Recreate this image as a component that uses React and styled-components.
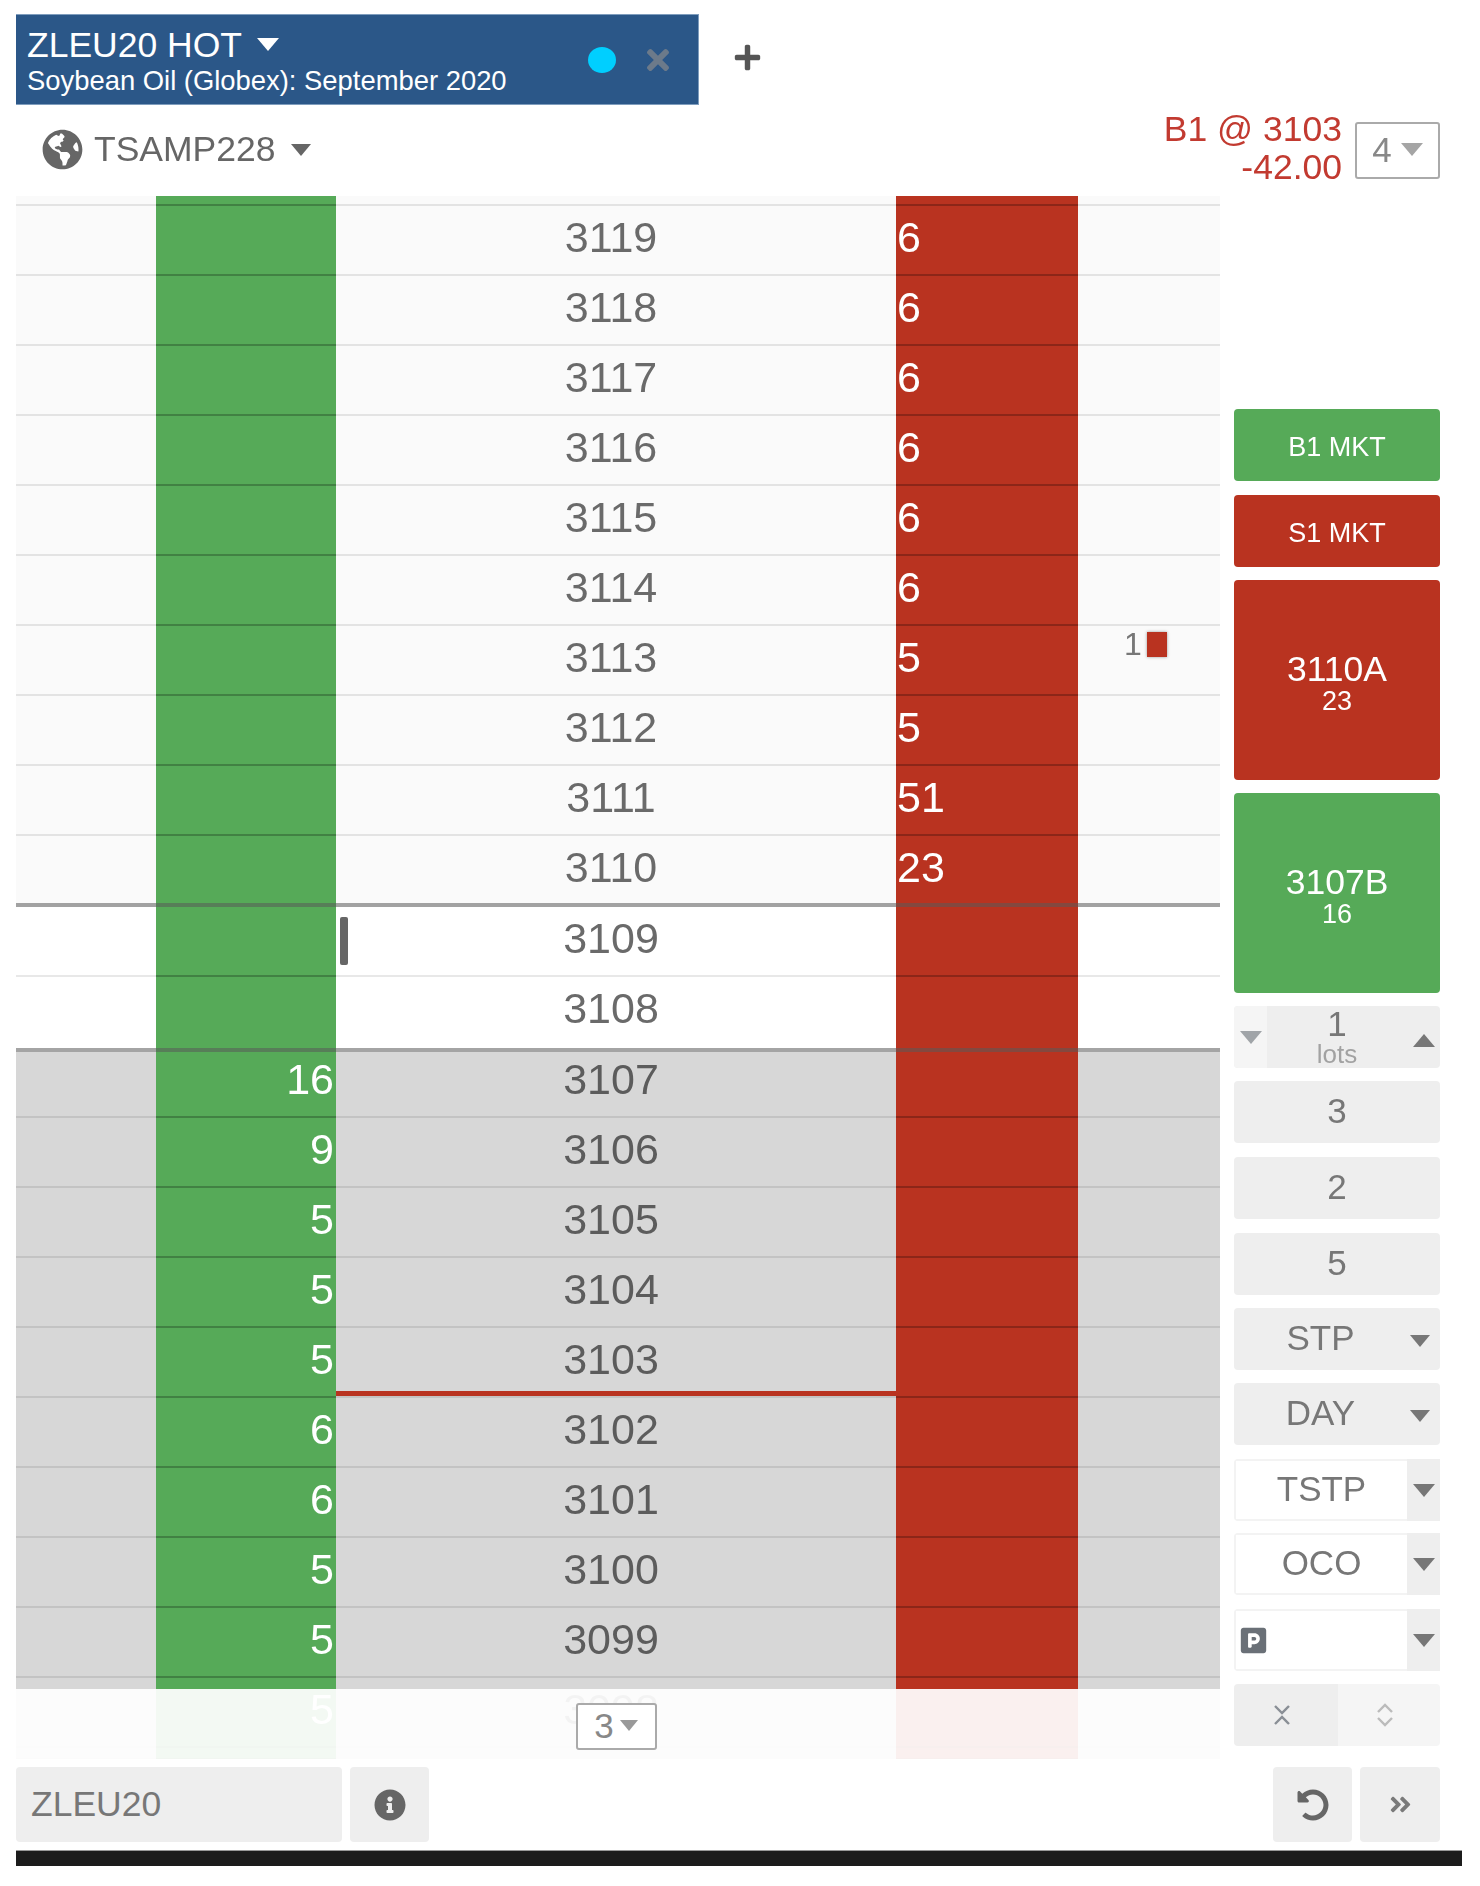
import React from 'react'
import styled, { createGlobalStyle } from 'styled-components'
import { FaGlobeAmericas, FaPlus, FaTimes, FaInfoCircle, FaUndoAlt, FaAngleDoubleRight, FaParking } from 'react-icons/fa'

const GREEN = '#56aa58'
const RED = '#b93320'
const FONT = '"Liberation Sans", Arial, sans-serif'

const GlobalStyle = createGlobalStyle`
    html, body {
        margin: 0;
        padding: 0;
        background: #fff;
        font-family: ${FONT};
    }
`

const Page = styled.div`
    width: 1480px;
    height: 1886px;
    padding: 14px 0 0 16px;
    box-sizing: border-box;
    overflow: hidden;
    color: #666;
    filter: blur(.6px);
`

const Caret = styled.span`
    display: inline-block;
    width: 0;
    height: 0;
    border-left: ${p => p.$size || 10}px solid transparent;
    border-right: ${p => p.$size || 10}px solid transparent;
    ${p => p.$up ? 'border-bottom' : 'border-top'}: ${p => (p.$size || 10) + 2}px solid ${p => p.$color || '#777'};
    flex: none;
`

const TabRow = styled.div`
    display: flex;
    align-items: center;
    height: 91px;
`

const Tab = styled.div`
    width: 683px;
    height: 91px;
    box-sizing: border-box;
    background: #2b5788;
    border: 1px solid #7f9dbd;
    border-left: 0;
    color: #fff;
    display: flex;
    align-items: center;
    padding: 0 24px 0 11px;
`

const TabText = styled.div`
    flex: 1;
`

const TabTitle = styled.div`
    font-size: 35.5px;
    line-height: 40px;
    display: flex;
    align-items: center;
    gap: 15px;
`

const TabSub = styled.div`
    font-size: 27.4px;
    line-height: 28px;
    margin-top: 2px;
    white-space: nowrap;
`

const Dot = styled.span`
    width: 28px;
    height: 26px;
    border-radius: 50%;
    background: #00cfff;
    margin-right: 26px;
`

const PlusButton = styled.div`
    margin-left: 34px;
    font-size: 29px;
    color: #555;
    display: flex;
    margin-top: -5px;
`

const AccountRow = styled.div`
    height: 91px;
    display: flex;
    align-items: center;
    padding-left: 26px;
    width: 1424px;
    box-sizing: border-box;
`

const Account = styled.div`
    flex: 1;
    display: flex;
    align-items: center;
    gap: 15px;
    font-size: 35.5px;
    color: #666;
    margin-top: -2px;
`

const AccountName = styled.div`
    display: flex;
    align-items: center;
    gap: 11px;
    svg {
        font-size: 41px;
    }
`

const Position = styled.div`
    color: #c23a30;
    font-size: 35.5px;
    line-height: 38px;
    text-align: right;
    margin-right: 13px;
    margin-top: -6px;
`

const SmallSelect = styled.div`
    box-sizing: border-box;
    width: ${p => p.$w}px;
    height: ${p => p.$h}px;
    padding-bottom: 2px;
    border: 2px solid #aaa;
    border-radius: 3px;
    background: #fff;
    display: flex;
    align-items: center;
    justify-content: center;
    gap: ${p => p.$gap}px;
    font-size: ${p => p.$font}px;
    color: #888;
`

const Main = styled.div`
    display: flex;
    gap: 14px;
`

const Ladder = styled.div`
    position: relative;
    width: 1204px;
    height: 1563px;
    overflow: hidden;
`

const Row = styled.div`
    display: grid;
    grid-template-columns: 140px 180px 560px 182px 142px;
    height: ${p => p.$h}px;
    line-height: ${p => p.$lh || 62}px;
    background: ${p => p.$bg};
`

const Cell = styled.div`
    position: relative;
    box-sizing: border-box;
    border-bottom: ${p => p.$thick ? '4px' : '2px'} solid
        ${p => p.$thick ? 'rgba(90, 90, 90, .55)' : p.$dark ? 'rgba(0, 0, 0, .24)' : 'rgba(0, 0, 0, .09)'};
    font-size: 43px;
    white-space: nowrap;
`

const BidCell = styled(Cell)`
    background: ${GREEN};
    color: #fff;
    text-align: right;
    padding-right: 2px;
`

const AskCell = styled(Cell)`
    background: ${RED};
    color: #fff;
    padding-left: 1px;
`

const PriceCell = styled(Cell)`
    text-align: center;
    padding-right: 10px;
    color: ${p => p.$shade ? '#5c5c5c' : '#6a6a6a'};
`

const RedLine = styled.div`
    position: absolute;
    left: 0;
    right: 0;
    bottom: 0;
    height: 5px;
    background: ${RED};
`

const Cursor = styled.div`
    position: absolute;
    left: 4px;
    top: 10px;
    width: 8px;
    height: 48px;
    border-radius: 2px;
    background: #666;
`

const Working = styled.div`
    position: absolute;
    left: 46px;
    top: 5px;
    display: flex;
    align-items: center;
    gap: 5px;
    font-size: 32px;
    line-height: 26px;
    color: #777;
`

const WorkingMark = styled.span`
    width: 20px;
    height: 25px;
    background: ${RED};
    box-shadow: 0 0 3px #999;
`

const FadeBar = styled.div`
    position: absolute;
    left: 0;
    right: 0;
    top: 1493px;
    height: 70px;
    background: rgba(255, 255, 255, .93);
    display: flex;
    justify-content: center;
    padding: 14px 4px 0 0;
    box-sizing: border-box;
`

const Panel = styled.div`
    width: 206px;
    padding-top: 213px;
    display: flex;
    flex-direction: column;
`

const PanelBtn = styled.div`
    box-sizing: border-box;
    height: ${p => p.$h || 62}px;
    margin-bottom: ${p => p.$gap || 13}px;
    border-radius: 4px;
    background: ${p => p.$bg || '#eee'};
    color: ${p => p.$bg ? '#fff' : '#777'};
    font-size: ${p => p.$font || 35}px;
    padding-top: ${p => p.$top || 0}px;
    padding-bottom: ${p => p.$bottom || 0}px;
    display: flex;
    flex-direction: column;
    align-items: center;
    justify-content: center;
`

const Quote = styled.div`
    font-size: 35.5px;
    line-height: 37px;
`

const QuoteSize = styled.div`
    font-size: 27px;
    line-height: 26px;
`

const LotsBox = styled.div`
    display: grid;
    grid-template-columns: 33px 1fr 33px;
    height: 62px;
    margin-bottom: 13px;
    border-radius: 4px;
    background: #eee;
`

const LotsSide = styled.div`
    display: flex;
    align-items: center;
    justify-content: center;
    border-radius: 4px 0 0 4px;
    background: ${p => p.$light ? '#f5f5f5' : 'transparent'};
    padding-top: ${p => p.$top || 0}px;
`

const LotsValue = styled.div`
    text-align: center;
    color: #777;
    font-size: 35px;
    line-height: 36px;
`

const LotsLabel = styled.span`
    display: block;
    font-size: 26px;
    line-height: 24px;
    color: #a2a2a2;
`

const DropBtn = styled.div`
    height: 62px;
    margin-bottom: ${p => p.$gap || 13}px;
    padding: 0 10px 3px 0;
    border-radius: 4px;
    background: #eee;
    color: #777;
    font-size: 35px;
    display: flex;
    align-items: center;
    box-sizing: border-box;
`

const DropLabel = styled.div`
    flex: 1;
    text-align: center;
    padding-right: 3px;
`

const DropCaret = styled(Caret)`
    margin-top: 6px;
`

const InputDrop = styled.div`
    height: 62px;
    margin-bottom: ${p => p.$gap}px;
    border-radius: 4px;
    background: #f3f3f3;
    display: flex;
    box-sizing: border-box;
`

const InputField = styled.div`
    flex: 1;
    margin: 2px 0 2px 2px;
    padding-bottom: ${p => p.$start ? '0' : '2px'};
    background: #fff;
    color: #777;
    font-size: 35px;
    display: flex;
    align-items: center;
    justify-content: ${p => p.$start ? 'flex-start' : 'center'};
    padding-left: ${p => p.$start ? '3px' : '0'};
    svg {
        font-size: 29px;
        color: #6a7077;
    }
`

const InputCaret = styled.div`
    width: 33px;
    background: #eee;
    display: flex;
    align-items: center;
    justify-content: center;
`

const SplitBtn = styled.div`
    display: flex;
    height: 62px;
    border-radius: 4px;
    overflow: hidden;
`

const SplitPart = styled.div`
    width: ${p => p.$w}px;
    background: ${p => p.$bg};
    padding-right: 8px;
    box-sizing: border-box;
    display: flex;
    align-items: center;
    justify-content: center;
`

const Footer = styled.div`
    width: 1424px;
    height: 75px;
    margin-top: 8px;
    display: flex;
    gap: 8px;
`

const SymbolBox = styled.div`
    width: 326px;
    border-radius: 4px;
    background: #eee;
    color: #777;
    font-size: 35.5px;
    line-height: 75px;
    padding-left: 15px;
    box-sizing: border-box;
`

const IconBtn = styled.div`
    width: ${p => p.$w}px;
    margin-left: ${p => p.$auto ? 'auto' : '0'};
    border-radius: 4px;
    background: #eee;
    color: ${p => p.$color || '#666'};
    font-size: ${p => p.$size}px;
    display: flex;
    align-items: center;
    justify-content: center;
`

const BlackBar = styled.div`
    width: 1446px;
    height: 16px;
    margin-top: 8px;
    background: #1c1c1c;
    border-top: 1px solid #999;
    box-sizing: border-box;
`

const Chevrons = ({ inward, color }) => (
    <svg width="16" height={inward ? 20 : 24} viewBox={inward ? '0 0 16 20' : '0 0 16 24'} fill="none" stroke={color} strokeWidth="2.4">
        {inward
            ? <path d="M1 1 L8 8 L15 1 M1 19 L8 12 L15 19" />
            : <path d="M1 9 L8 2 L15 9 M1 15 L8 22 L15 15" />}
    </svg>
)

// ladder prices, sizes sit on the row they belong to
const asks = { 3119: 6, 3118: 6, 3117: 6, 3116: 6, 3115: 6, 3114: 6, 3113: 5, 3112: 5, 3111: 51, 3110: 23 }
const bids = { 3107: 16, 3106: 9, 3105: 5, 3104: 5, 3103: 5, 3102: 6, 3101: 6, 3100: 5, 3099: 5, 3098: 5 }

// rows around the inside market are not all the same height in the ladder
const rowHeight = price => {
    if (price === 3110) return 71
    if (price === 3108) return 75
    if (price === 3107) return 66
    return 70
}

const rowBackground = price => {
    if (price >= 3110) return '#fafafa'
    if (price >= 3108) return '#fff'
    return '#d7d7d7'
}

const prices = []
for (let p = 3119; p >= 3098; p--) prices.push(p)

const EmptyRow = ({ h, bg }) => (
    <Row $h={h} $bg={bg}>
        <Cell />
        <BidCell $dark />
        <PriceCell />
        <AskCell $dark />
        <Cell />
    </Row>
)

const LadderRow = ({ price }) => {
    const shade = price <= 3107
    const thick = price === 3110 || price === 3108
    return (
        <Row $h={rowHeight(price)} $lh={price === 3107 ? 54 : 62} $bg={rowBackground(price)}>
            <Cell $thick={thick} />
            <BidCell $dark $thick={thick}>{bids[price]}</BidCell>
            <PriceCell $shade={shade} $thick={thick}>
                {price}
                {price === 3109 && <Cursor />}
                {price === 3103 && <RedLine />}
            </PriceCell>
            <AskCell $dark $thick={thick}>{asks[price]}</AskCell>
            <Cell $thick={thick}>
                {price === 3113 && <Working>1<WorkingMark /></Working>}
            </Cell>
        </Row>
    )
}

const App = () => (
    <Page>
        <GlobalStyle />
        <TabRow>
            <Tab>
                <TabText>
                    <TabTitle>ZLEU20 HOT <Caret $color="#fff" $size={11} /></TabTitle>
                    <TabSub>Soybean Oil (Globex): September 2020</TabSub>
                </TabText>
                <Dot />
                <FaTimes size={32} color="#6c7a8a" />
            </Tab>
            <PlusButton><FaPlus /></PlusButton>
        </TabRow>
        <AccountRow>
            <Account>
                <AccountName><FaGlobeAmericas />TSAMP228</AccountName>
                <Caret $size={10} $color="#666" />
            </Account>
            <Position>B1 @ 3103<br />-42.00</Position>
            <SmallSelect $w={85} $h={57} $gap={9} $font={35}>4 <Caret $size={11} $color="#a5a5a5" /></SmallSelect>
        </AccountRow>
        <Main>
            <Ladder>
                <EmptyRow h={10} bg="#fafafa" />
                {prices.map(price => <LadderRow key={price} price={price} />)}
                <EmptyRow h={12} bg="#d7d7d7" />
                <FadeBar>
                    <SmallSelect $w={81} $h={47} $gap={6} $font={35}>3 <Caret $size={9} $color="#999" /></SmallSelect>
                </FadeBar>
            </Ladder>
            <Panel>
                <PanelBtn $bg={GREEN} $h={72} $gap={14} $font={27} $top={5}>B1 MKT</PanelBtn>
                <PanelBtn $bg={RED} $h={72} $gap={13} $font={27} $top={5}>S1 MKT</PanelBtn>
                <PanelBtn $bg={RED} $h={200} $top={5}>
                    <Quote>3110A</Quote>
                    <QuoteSize>23</QuoteSize>
                </PanelBtn>
                <PanelBtn $bg={GREEN} $h={200} $top={5}>
                    <Quote>3107B</Quote>
                    <QuoteSize>16</QuoteSize>
                </PanelBtn>
                <LotsBox>
                    <LotsSide $light><Caret $color="#a0a4a8" $size={11} /></LotsSide>
                    <LotsValue>1<LotsLabel>lots</LotsLabel></LotsValue>
                    <LotsSide $top={6}><Caret $up $color="#777" $size={11} /></LotsSide>
                </LotsBox>
                <PanelBtn $gap={14} $bottom={3}>3</PanelBtn>
                <PanelBtn $gap={14} $bottom={3}>2</PanelBtn>
                <PanelBtn $gap={13} $bottom={3}>5</PanelBtn>
                <DropBtn $gap={13}><DropLabel>STP</DropLabel><DropCaret $size={10} /></DropBtn>
                <DropBtn $gap={14}><DropLabel>DAY</DropLabel><DropCaret $size={10} /></DropBtn>
                <InputDrop $gap={12}><InputField>TSTP</InputField><InputCaret><Caret $size={11} /></InputCaret></InputDrop>
                <InputDrop $gap={14}><InputField>OCO</InputField><InputCaret><Caret $size={11} /></InputCaret></InputDrop>
                <InputDrop $gap={13}><InputField $start><FaParking /></InputField><InputCaret><Caret $size={11} /></InputCaret></InputDrop>
                <SplitBtn>
                    <SplitPart $w={104} $bg="#eee"><Chevrons inward color="#8a8f96" /></SplitPart>
                    <SplitPart $w={102} $bg="#f5f5f5"><Chevrons color="#bbb" /></SplitPart>
                </SplitBtn>
            </Panel>
        </Main>
        <Footer>
            <SymbolBox>ZLEU20</SymbolBox>
            <IconBtn $w={79} $size={32}><FaInfoCircle /></IconBtn>
            <IconBtn $w={79} $auto $size={32}><FaUndoAlt /></IconBtn>
            <IconBtn $w={80} $size={25} $color="#7a7a7a"><FaAngleDoubleRight /></IconBtn>
        </Footer>
        <BlackBar />
    </Page>
)

export default App
